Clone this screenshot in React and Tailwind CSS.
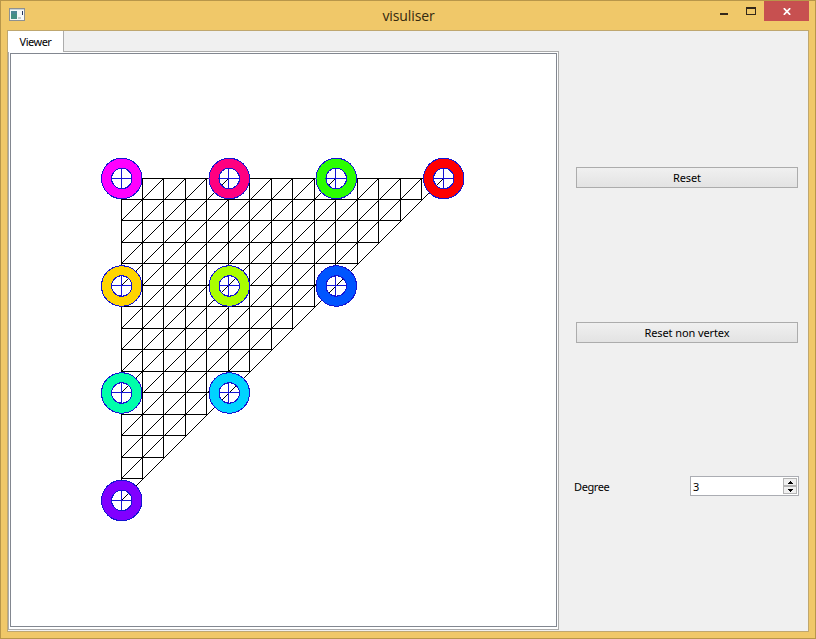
const STEPS = 15;
const ORIGIN_X = 121;
const ORIGIN_Y = 178;
const at = (i) => Math.floor((i * 322) / STEPS);

const NODES = [
  { c: 0, r: 0, fill: '#ff00ff' },
  { c: 5, r: 0, fill: '#ff0080' },
  { c: 10, r: 0, fill: '#2bff00' },
  { c: 15, r: 0, fill: '#ff0000' },
  { c: 0, r: 5, fill: '#ffd500' },
  { c: 5, r: 5, fill: '#aaff00' },
  { c: 10, r: 5, fill: '#0055ff' },
  { c: 0, r: 10, fill: '#00ffaa' },
  { c: 5, r: 10, fill: '#00d4ff' },
  { c: 0, r: 15, fill: '#8000ff' },
];

const px = (i) => ORIGIN_X + at(i) + 0.5;
const py = (i) => ORIGIN_Y + at(i) + 0.5;
const indices = Array.from({ length: STEPS + 1 }, (_, i) => i);

const ring = (i) => (i % STEPS === 0 ? 0 : 0.5);

function Mesh() {
  return (
    <svg className="block h-[572px] w-[545px]" viewBox="11 54 545 572" shapeRendering="crispEdges">
      <g stroke="#000" strokeWidth="1" fill="none">
        {indices.slice(0, STEPS).map((i) => (
          <g key={i}>
            <path d={`M${px(0)} ${py(i)}H${px(STEPS - i)}`} />
            <path d={`M${px(i)} ${py(0)}V${py(STEPS - i)}`} />
            <path d={`M${px(0)} ${py(i + 1)}L${px(i + 1)} ${py(0)}`} />
          </g>
        ))}
      </g>
      {NODES.map(({ c, r, fill }) => {
        const x = px(c);
        const y = py(r);
        const rx = x + ring(c);
        const ry = y + ring(r);
        return (
          <g key={fill} stroke="#1414d2" strokeWidth="1">
            <path
              fill={fill}
              fillRule="evenodd"
              d={`M${rx - 20} ${ry}a20.25 20.25 0 1 0 40.5 0a20.25 20.25 0 1 0 -40.5 0zM${rx - 10} ${ry}a10.25 10.25 0 1 0 20.5 0a10.25 10.25 0 1 0 -20.5 0z`}
            />
            <path fill="none" d={`M${x - 10} ${y}h20M${x} ${y - 10}v20`} />
          </g>
        );
      })}
    </svg>
  );
}

function TitleBar() {
  return (
    <header className="flex h-[29px] items-start">
      <svg className="ml-[8px] mt-[7px] h-[13px] w-[16px] shrink-0" viewBox="0 0 16 13">
        <rect x="0.5" y="0.5" width="15" height="12" fill="#f6f8f8" stroke="#8d9191" />
        <path d="M1 1.5h14" stroke="#c9d3d8" />
        <rect x="2" y="3" width="6" height="8" fill="#448f83" />
        <path d="M2 3h6v3H2z" fill="#4b8794" />
        <path d="M9 10h3" stroke="#c8cccc" strokeWidth="2" />
        <path d="M13.5 3v4" stroke="#25355e" />
      </svg>
      <h1 className="ml-[78px] mt-[5px] flex-1 text-center font-['Open_Sans',sans-serif] text-[14px] leading-[20px] tracking-[-0.1px] text-[#33290f]">
        visuliser
      </h1>
      <div className="flex">
        <svg className="h-[20px] w-[50px]" viewBox="714 1 50 20" shapeRendering="crispEdges">
          <path d="M720 13h8v2h-8z" fill="#33271a" />
          <path d="M746 7h10v8h-10zM747 9v5h8V9z" fillRule="evenodd" fill="#33271a" />
        </svg>
        <button className="mr-[6px] flex h-[20px] w-[45px] items-center justify-center bg-[#c75050]" aria-label="Close">
          <svg className="h-[7px] w-[8px]" viewBox="0 0 8 7">
            <path d="M0.8 0.2L7.2 6.8M7.2 0.2L0.8 6.8" stroke="#fff" strokeWidth="1.7" />
          </svg>
        </button>
      </div>
    </header>
  );
}

function PushButton({ children }) {
  return (
    <button className="flex h-[21px] w-[222px] items-center justify-center border border-[#acacac] bg-linear-to-b from-[#f0f0f0] to-[#e3e3e3] leading-[14px] tracking-[-0.1px]">
      {children}
    </button>
  );
}

function Arrow({ down }) {
  return (
    <div className="flex flex-1 items-center justify-center border border-[#b4b4b4] bg-[#f0f0f0]">
      <svg className="h-[3px] w-[5px]" viewBox="0 0 5 3" shapeRendering="crispEdges">
        <path d={down ? 'M0 0h5v1H4v1H3v1H2V2H1V1H0z' : 'M0 3h5V2H4V1H3V0H2v1H1v1H0z'} />
      </svg>
    </div>
  );
}

export default function App() {
  return (
    <div className="h-[639px] w-[816px] overflow-hidden border border-[#b8964a] bg-[#f0c869] font-['Noto_Sans',sans-serif] text-[11px] text-black">
      <TitleBar />
      <main className="ml-[6px] flex h-[602px] w-[802px] border border-[#bfa76f] bg-[#f0f0f0]">
        <section className="flex w-[551px] flex-col">
          <div className="z-10 -mb-px flex h-[21px] w-[56px] items-center justify-center border-r border-[#acacac] bg-white leading-[14px] tracking-[-0.5px]">
            Viewer
          </div>
          <div className="h-[579px] w-[551px] border border-[#acacac] bg-white p-px">
            <div className="h-[574px] w-[547px] border border-[#828790] bg-white">
              <Mesh />
            </div>
          </div>
        </section>
        <aside className="flex flex-col pl-[17px] pt-[136px]">
          <PushButton>Reset</PushButton>
          <div className="mt-[134px]">
            <PushButton>Reset non vertex</PushButton>
          </div>
          <div className="-ml-[2px] mt-[133px] flex h-[20px] w-[225px] items-center justify-between">
            <span className="pt-[2px] tracking-[-0.4px]">Degree</span>
            <div className="flex h-[20px] w-[109px] border border-[#abadb3] bg-white p-px">
              <span className="flex-1 pl-px leading-[17px]">3</span>
              <div className="flex w-[14px] flex-col">
                <Arrow />
                <Arrow down />
              </div>
            </div>
          </div>
        </aside>
      </main>
    </div>
  );
}
